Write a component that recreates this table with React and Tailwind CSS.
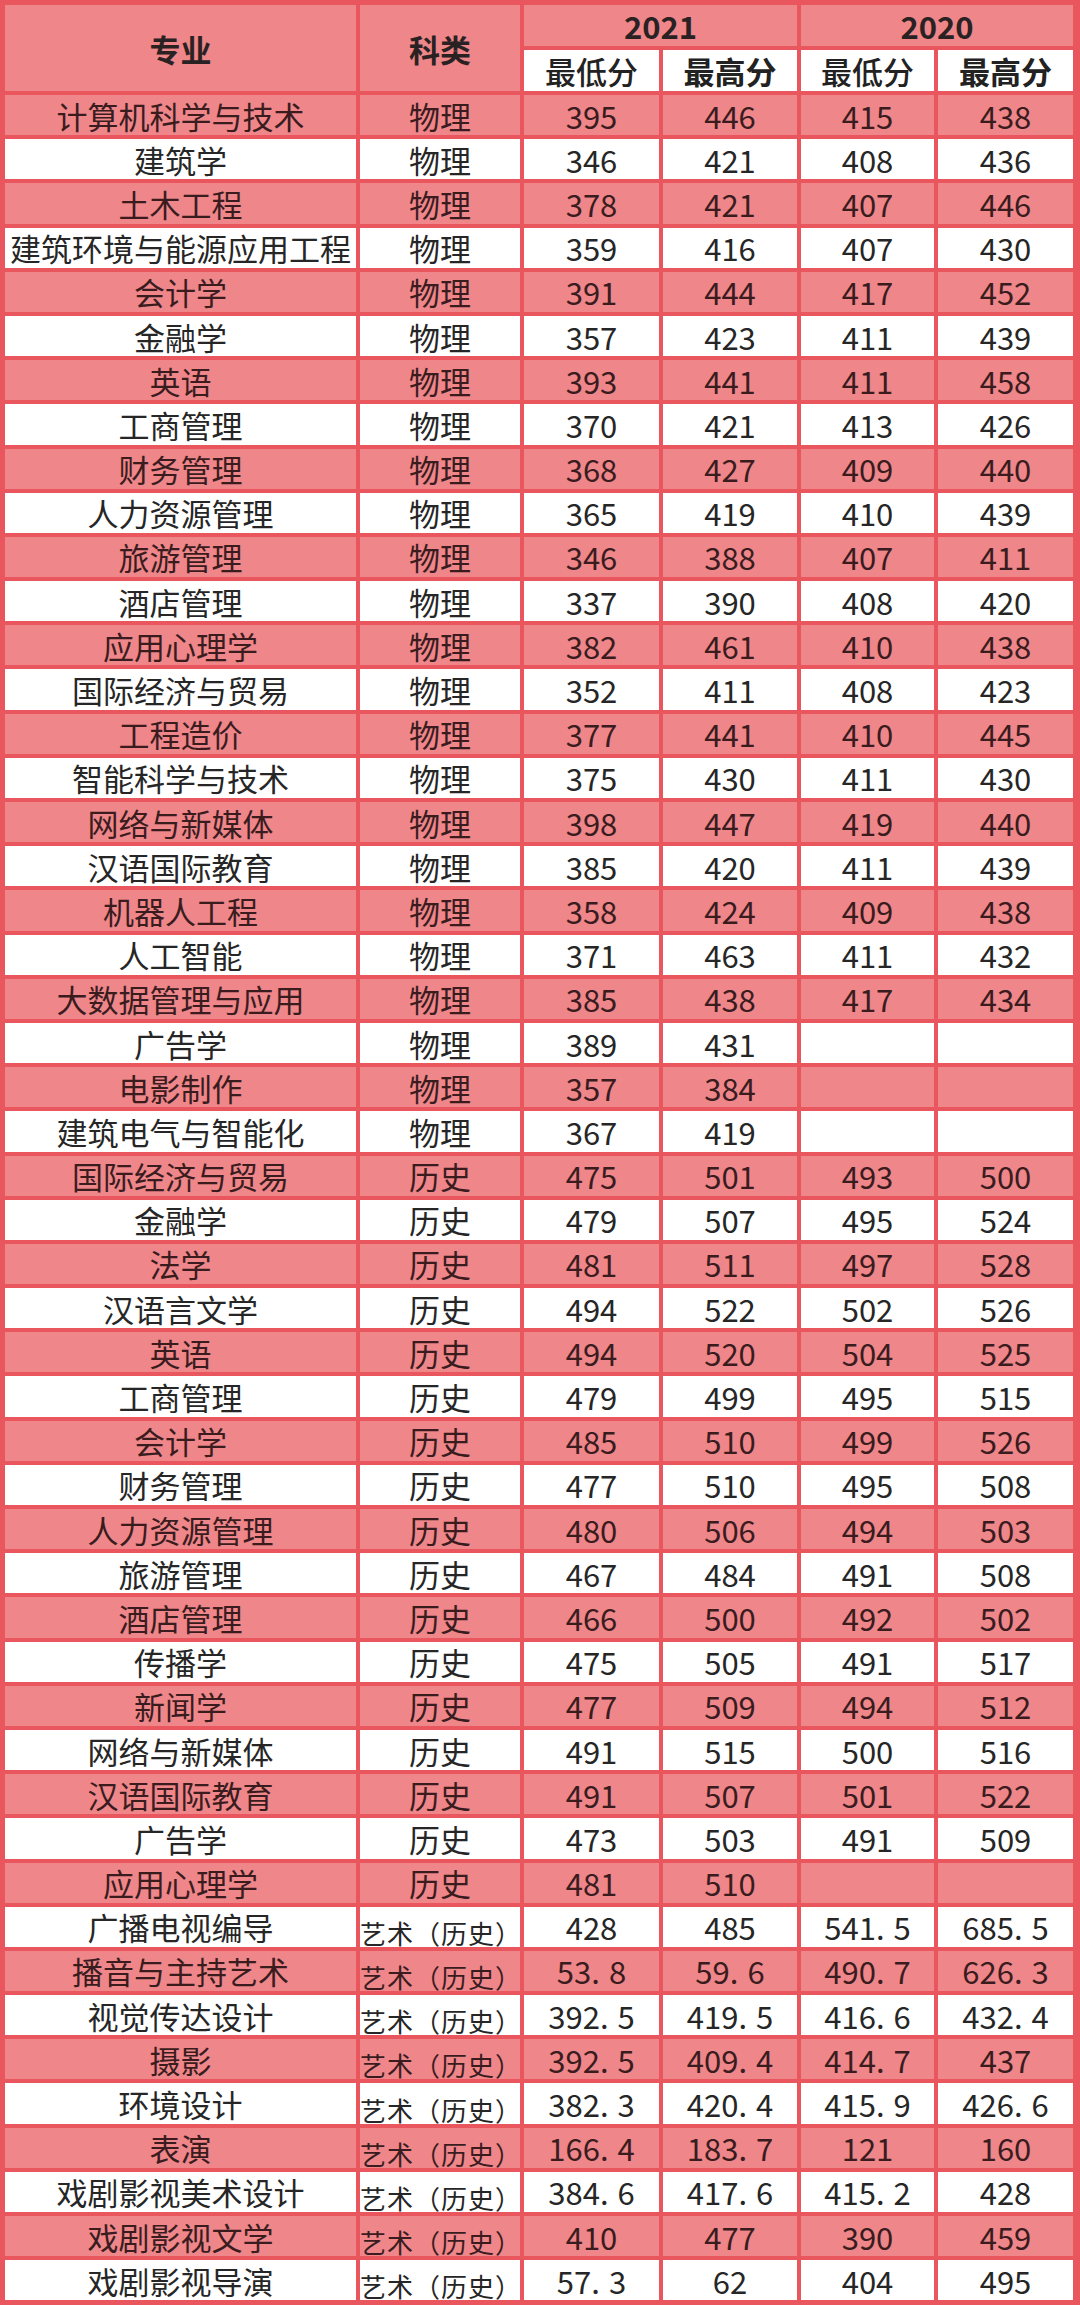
import React from "react";

const rows = [
  ["计算机科学与技术", "物理", "395", "446", "415", "438"],
  ["建筑学", "物理", "346", "421", "408", "436"],
  ["土木工程", "物理", "378", "421", "407", "446"],
  ["建筑环境与能源应用工程", "物理", "359", "416", "407", "430"],
  ["会计学", "物理", "391", "444", "417", "452"],
  ["金融学", "物理", "357", "423", "411", "439"],
  ["英语", "物理", "393", "441", "411", "458"],
  ["工商管理", "物理", "370", "421", "413", "426"],
  ["财务管理", "物理", "368", "427", "409", "440"],
  ["人力资源管理", "物理", "365", "419", "410", "439"],
  ["旅游管理", "物理", "346", "388", "407", "411"],
  ["酒店管理", "物理", "337", "390", "408", "420"],
  ["应用心理学", "物理", "382", "461", "410", "438"],
  ["国际经济与贸易", "物理", "352", "411", "408", "423"],
  ["工程造价", "物理", "377", "441", "410", "445"],
  ["智能科学与技术", "物理", "375", "430", "411", "430"],
  ["网络与新媒体", "物理", "398", "447", "419", "440"],
  ["汉语国际教育", "物理", "385", "420", "411", "439"],
  ["机器人工程", "物理", "358", "424", "409", "438"],
  ["人工智能", "物理", "371", "463", "411", "432"],
  ["大数据管理与应用", "物理", "385", "438", "417", "434"],
  ["广告学", "物理", "389", "431", "", ""],
  ["电影制作", "物理", "357", "384", "", ""],
  ["建筑电气与智能化", "物理", "367", "419", "", ""],
  ["国际经济与贸易", "历史", "475", "501", "493", "500"],
  ["金融学", "历史", "479", "507", "495", "524"],
  ["法学", "历史", "481", "511", "497", "528"],
  ["汉语言文学", "历史", "494", "522", "502", "526"],
  ["英语", "历史", "494", "520", "504", "525"],
  ["工商管理", "历史", "479", "499", "495", "515"],
  ["会计学", "历史", "485", "510", "499", "526"],
  ["财务管理", "历史", "477", "510", "495", "508"],
  ["人力资源管理", "历史", "480", "506", "494", "503"],
  ["旅游管理", "历史", "467", "484", "491", "508"],
  ["酒店管理", "历史", "466", "500", "492", "502"],
  ["传播学", "历史", "475", "505", "491", "517"],
  ["新闻学", "历史", "477", "509", "494", "512"],
  ["网络与新媒体", "历史", "491", "515", "500", "516"],
  ["汉语国际教育", "历史", "491", "507", "501", "522"],
  ["广告学", "历史", "473", "503", "491", "509"],
  ["应用心理学", "历史", "481", "510", "", ""],
  ["广播电视编导", "艺术（历史）", "428", "485", "541.5", "685.5"],
  ["播音与主持艺术", "艺术（历史）", "53.8", "59.6", "490.7", "626.3"],
  ["视觉传达设计", "艺术（历史）", "392.5", "419.5", "416.6", "432.4"],
  ["摄影", "艺术（历史）", "392.5", "409.4", "414.7", "437"],
  ["环境设计", "艺术（历史）", "382.3", "420.4", "415.9", "426.6"],
  ["表演", "艺术（历史）", "166.4", "183.7", "121", "160"],
  ["戏剧影视美术设计", "艺术（历史）", "384.6", "417.6", "415.2", "428"],
  ["戏剧影视文学", "艺术（历史）", "410", "477", "390", "459"],
  ["戏剧影视导演", "艺术（历史）", "57.3", "62", "404", "495"],
];

function Num({ v }) {
  if (v.includes(".")) {
    const [a, b] = v.split(".");
    return (
      <span>
        {a}
        <span className="mr-[9px]">.</span>
        {b}
      </span>
    );
  }
  return <span>{v}</span>;
}

export default function App() {
  return (
    <div
      className="w-[1080px] h-[2305px] bg-[#e9565d] px-[5px] pt-[5px] pb-[4px] overflow-hidden"
      style={{ fontFamily: '"Noto Sans CJK SC", "Noto Sans", sans-serif' }}
    >
      <div className="grid grid-cols-[351px_160px_135px_134px_133px_135px] gap-x-[4px] gap-y-[4px] text-[31px] leading-none">
        <div className="row-span-2 bg-[#ee868a] flex items-center justify-center font-bold text-[#2a2222]">
          专业
        </div>
        <div className="row-span-2 bg-[#ee868a] flex items-center justify-center font-bold text-[#2a2222]">
          科类
        </div>
        <div className="col-span-2 h-[41px] bg-[#ee868a] flex items-center justify-center font-bold text-[#2a2222]">
          2021
        </div>
        <div className="col-span-2 h-[41px] bg-[#ee868a] flex items-center justify-center font-bold text-[#2a2222]">
          2020
        </div>
        <div className="h-[41px] bg-white flex items-center justify-center font-medium text-[#222]">最低分</div>
        <div className="h-[41px] bg-white flex items-center justify-center font-bold text-[#222]">最高分</div>
        <div className="h-[41px] bg-white flex items-center justify-center font-medium text-[#222]">最低分</div>
        <div className="h-[41px] bg-white flex items-center justify-center font-bold text-[#222]">最高分</div>
        {rows.map((r, i) => {
          const pink = i % 2 === 0;
          const cell = pink
            ? "h-[40.2px] bg-[#ee868a] text-[#3a1c1e] flex justify-center"
            : "h-[40.2px] bg-white text-[#262626] flex justify-center";
          const art = r[1].length > 2;
          return (
            <React.Fragment key={i}>
              <div className={cell + " items-center"}>{r[0]}</div>
              {art ? (
                <div className={cell + " items-end text-[26px] tracking-[1px] pb-[1px]"}>
                  <span>{r[1]}</span>
                </div>
              ) : (
                <div className={cell + " items-center"}>{r[1]}</div>
              )}
              {r.slice(2).map((v, j) => (
                <div key={j} className={cell + " items-center"}>
                  <Num v={v} />
                </div>
              ))}
            </React.Fragment>
          );
        })}
      </div>
    </div>
  );
}
